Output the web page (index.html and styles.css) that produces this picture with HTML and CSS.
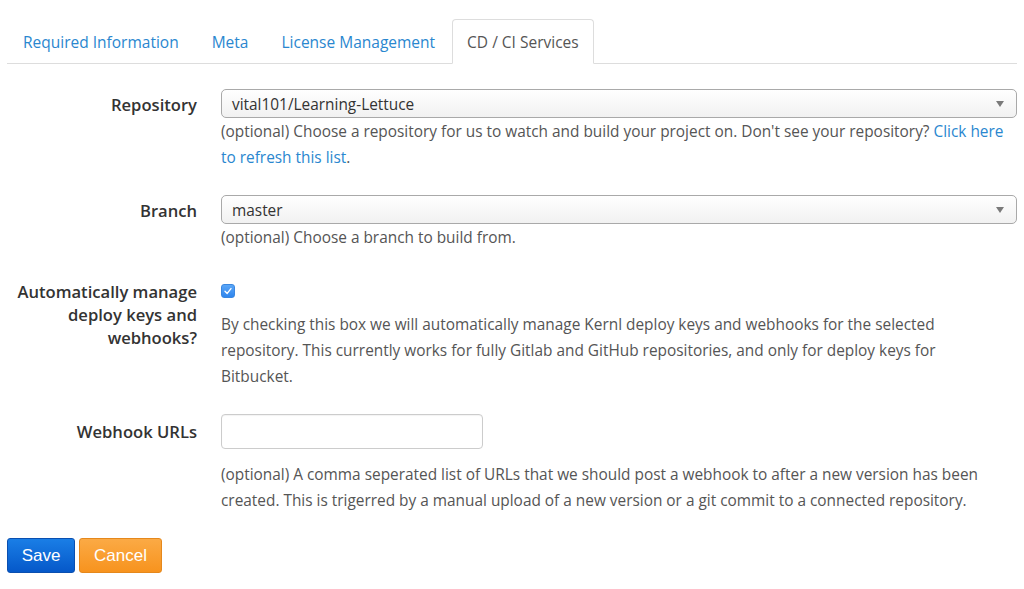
FILE: index.html
```html
<!DOCTYPE html>
<html>
<head>
<meta charset="utf-8">
<link rel="stylesheet" href="styles.css">
</head>
<body>
<div class="page">
  <ul class="tabs">
    <li class="tab"><a>Required Information</a></li>
    <li class="tab"><a>Meta</a></li>
    <li class="tab"><a>License Management</a></li>
    <li class="tab active"><a>CD / CI Services</a></li>
  </ul>

  <form class="form">
    <div class="row row-repo">
      <label class="label">Repository</label>
      <div class="field">
        <div class="select"><span>vital101/Learning-Lettuce</span><span class="arrow"></span></div>
        <p class="help">(optional) Choose a repository for us to watch and build your project on. Don't see your repository? <a class="link">Click here to refresh this list</a>.</p>
      </div>
    </div>

    <div class="row row-branch">
      <label class="label">Branch</label>
      <div class="field">
        <div class="select"><span>master</span><span class="arrow"></span></div>
        <p class="help">(optional) Choose a branch to build from.</p>
      </div>
    </div>

    <div class="row row-check">
      <label class="label label-multi">Automatically manage deploy keys and webhooks?</label>
      <div class="field">
        <div class="checkbox"><svg width="10" height="10" viewBox="0 0 10 10"><path d="M2 5.2 L4.2 7.4 L8 2.6" fill="none" stroke="#fff" stroke-width="1.4" stroke-linecap="round" stroke-linejoin="round"/></svg></div>
        <p class="help help-check">By checking this box we will automatically manage Kernl deploy keys and webhooks for the selected repository. This currently works for fully Gitlab and GitHub repositories, and only for deploy keys for Bitbucket.</p>
      </div>
    </div>

    <div class="row row-hook">
      <label class="label">Webhook URLs</label>
      <div class="field">
        <div class="input"></div>
        <p class="help help-hook">(optional) A comma seperated list of URLs that we should post a webhook to after a new version has been created. This is trigerred by a manual upload of a new version or a git commit to a connected repository.</p>
      </div>
    </div>

    <div class="actions">
      <button type="button" class="btn btn-save">Save</button>
      <button type="button" class="btn btn-cancel">Cancel</button>
    </div>
  </form>
</div>
</body>
</html>
```

FILE: styles.css
```css
* { box-sizing: border-box; }
html, body { margin: 0; padding: 0; background: #fff; }
body {
  font-family: "Open Sans", "DejaVu Sans", sans-serif;
  font-size: 15.4px;
  color: #555;
}
.page { padding: 0 7px; }

.tabs {
  list-style: none;
  margin: 19px 0 0 0;
  padding: 0;
  display: flex;
  border-bottom: 1px solid #ddd;
  height: 45px;
}
.tab {
  margin-right: 1px;
  margin-bottom: -1px;
}
.tab a {
  display: block;
  height: 45px;
  padding: 0 15px 0 15px;
  line-height: 45px;
  color: #2a87cf;
  font-size: 15.5px;
  border: 1px solid transparent;
  border-radius: 4px 4px 0 0;
}
.tab.active a {
  color: #555;
  background: #fff;
  border-color: #ddd;
  border-bottom-color: #fff;
  padding: 0 14px;
}

.form { margin-top: 25px; }
.row {
  display: grid;
  grid-template-columns: 190px 1fr;
  column-gap: 24px;
}
.label {
  text-align: right;
  font-weight: 600;
  color: #333;
  font-size: 16.6px;
  line-height: 28px;
  padding-top: 2px;
}
.label-multi { line-height: 23px; padding-top: 0; }
.field { min-width: 0; }

.select {
  height: 29px;
  border: 1px solid #a9a9a9;
  border-radius: 5px;
  background: linear-gradient(#ffffff, #f1f1f1);
  display: flex;
  align-items: center;
  justify-content: space-between;
  padding: 1px 12px 0 10px;
  color: #333;
  font-size: 15.4px;
}
.arrow {
  width: 0; height: 0;
  border-left: 4px solid transparent;
  border-right: 4px solid transparent;
  border-top: 6px solid #7a7a7a;
}
.help {
  margin: 1px 0 0 0;
  line-height: 26px;
  font-size: 15.4px;
}
.link { color: #2a87cf; }

.row-repo { margin-bottom: 24px; }
.row-branch { margin-bottom: 29px; }
.row-check { margin-bottom: 24px; }

.checkbox {
  width: 14px;
  height: 14px;
  margin-top: 4px;
  border-radius: 3px;
  background: linear-gradient(#5aa6f7, #2f86ee);
  border: 1px solid #3a87e0;
  display: flex;
  align-items: center;
  justify-content: center;
}
.help-check { margin-top: 14px; max-width: 750px; }

.row-hook .label { line-height: 35px; padding-top: 0; }
.input {
  width: 262px;
  height: 35px;
  border: 1px solid #ccc;
  border-radius: 4px;
  background: #fff;
  box-shadow: inset 0 1px 1px rgba(0,0,0,0.05);
}
.help-hook { margin-top: 13px; }

.actions {
  margin-top: 24px;
  display: flex;
  gap: 4px;
}
.btn {
  font-family: "Liberation Sans", Arial, sans-serif;
  font-size: 17px;
  color: #fff;
  height: 35px;
  border-radius: 3px;
  padding: 0 10px;
  cursor: pointer;
}
.btn-save {
  width: 68px;
  background: linear-gradient(#1a7ee6, #0558c9);
  border: 1px solid #0a4fb0;
}
.btn-cancel {
  width: 83px;
  background: linear-gradient(#fbaa45, #f7931e);
  border: 1px solid #e5881c;
}
```
